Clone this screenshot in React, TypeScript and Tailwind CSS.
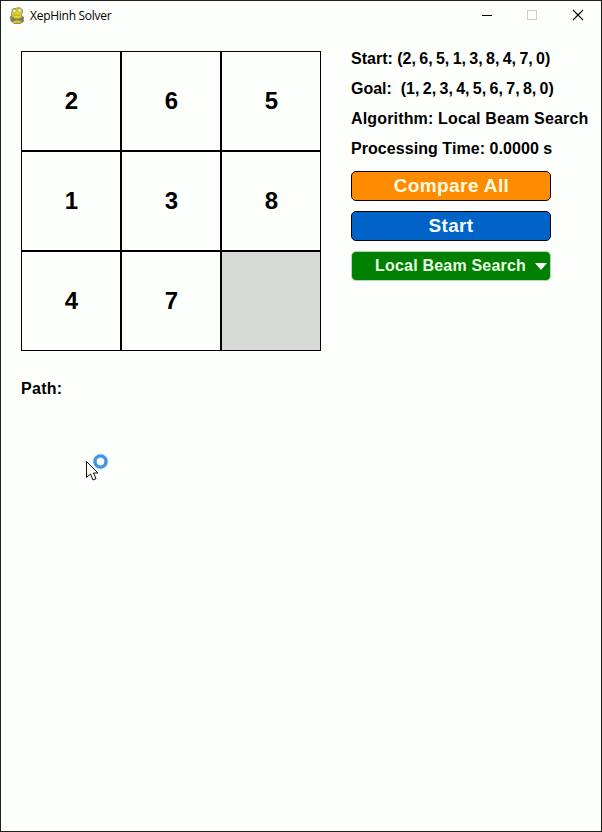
const tiles = [2, 6, 5, 1, 3, 8, 4, 7, 0];

function SnakeIcon() {
  return (
    <svg width="16" height="18" viewBox="0 0 16 18" className="mr-[5px] shrink-0">
      <path d="M2.500 12.500 1 10l2-1 2 3M13 9.500l1.500.500-.500 5-2 1" fill="#c9b61d" stroke="#66601c" strokeWidth=".6" />
      <path d="M3 5C2.500 2.500 4 .800 6.500 1.500 9 .200 12 .500 13 2.500c1 2 .300 4-.500 5l1 4-2 5H5L2.500 14 4 10.500C2 9 2.500 7 3 5Z" fill="#e3d12c" stroke="#766c1c" strokeWidth=".7" />
      <circle cx="5.300" cy="3.900" r="1.800" fill="#f7f5c5" stroke="#8c832b" strokeWidth=".5" />
      <circle cx="10.700" cy="3.500" r="1.900" fill="#f7f5c5" stroke="#8c832b" strokeWidth=".5" />
      <path d="M4 7.500c2 1.300 6 1.300 8.500-.500" fill="none" stroke="#a3941c" strokeWidth=".7" />
      <path d="M1.500 10.500h3l1.500 1h4l1.500-1h3v4h-3l-1-1H6l-1 1H1.500Z" fill="#777b68" />
      <path d="M5.500 15h6" stroke="#d6c52c" strokeWidth="2" />
    </svg>
  );
}

function TitleBar() {
  return (
    <header className="flex h-[30px] items-center pl-2 font-['Open_Sans','Noto_Sans',sans-serif] text-[12px]">
      <SnakeIcon />
      <span className="tracking-[-0.27px]">XepHinh Solver</span>
      <div className="ml-auto flex">
        <svg width="45" height="28" viewBox="0 0 45 28" shapeRendering="crispEdges">
          <path d="M17 13.500h10" stroke="#000" />
        </svg>
        <svg width="45" height="28" viewBox="0 0 45 28" shapeRendering="crispEdges">
          <path d="M17.500 8.500h9v9h-9z" fill="none" stroke="#ccc" />
        </svg>
        <svg width="46" height="28" viewBox="0 0 46 28">
          <path d="m18 8 10 10m0-10L18 18" stroke="#000" strokeWidth="1.100" />
        </svg>
      </div>
    </header>
  );
}

function Board() {
  return (
    <div className="grid h-[300px] w-[300px] shrink-0 grid-cols-3 grid-rows-3">
      {tiles.map((n) => (
        <div
          key={n}
          className={`flex items-center justify-center border border-black pb-px pl-px text-2xl ${n === 0 ? "bg-[#d8dad8]" : ""}`}
        >
          {n !== 0 && n}
        </div>
      ))}
    </div>
  );
}

export default function App() {
  return (
    <div className="relative h-[832px] w-[602px] overflow-hidden border border-[#202020] bg-[#fdfffc] font-['Liberation_Sans',Arial,sans-serif] text-black">
      <TitleBar />
      <main className="px-5 pt-5 font-bold">
        <div className="flex gap-[30px]">
          <Board />
          <div className="flex w-[240px] shrink-0 flex-col whitespace-pre text-base">
            <p className="-mt-[7px] h-[30px] leading-[30px]">Start: <span className="[word-spacing:-1.1px]">(2, 6, 5, 1, 3, 8, 4, 7, 0)</span></p>
            <p className="h-[30px] leading-[30px]">Goal:  <span className="[word-spacing:-1.1px]">(1, 2, 3, 4, 5, 6, 7, 8, 0)</span></p>
            <p className="h-[30px] leading-[30px] tracking-[0.16px]">Algorithm: Local Beam Search</p>
            <p className="h-[30px] leading-[30px] tracking-[0.06px]">Processing Time: 0.0000 s</p>
            <button className="mt-[7px] h-[30px] w-[200px] rounded-[5px] border border-black bg-[#ff8c00] pl-px text-[19px] leading-[28px] tracking-[0.4px] text-[#fffbe0]">Compare All</button>
            <button className="mt-2.5 h-[30px] w-[200px] rounded-[5px] border border-black bg-[#0063c7] text-[19px] leading-[28px] tracking-[0.3px] text-[#f5fcff]">Start</button>
            <button className="mt-2.5 flex h-[30px] w-[200px] items-center rounded-[5px] border border-[#b5d9b1] bg-[#008000] pl-[23px] text-[#eaffe3]">
              <span className="w-[160px] text-left leading-[28px] tracking-[0.2px]">Local Beam Search</span>
              <svg width="12" height="7" viewBox="0 0 12 7"><path d="M0 0h12L6 7Z" fill="#fff" /></svg>
            </button>
          </div>
        </div>
        <p className="mt-[28px] text-base leading-5 tracking-[0.3px]">Path:</p>
      </main>
      <svg className="absolute left-[84px] top-[451px]" width="26" height="31" viewBox="0 0 26 31">
        <circle cx="15.500" cy="9.500" r="5.700" fill="#fff" stroke="#b9e4fb" strokeWidth="4.500" />
        <circle cx="15.500" cy="9.500" r="5.500" fill="none" stroke="#3f95e3" strokeWidth="3.200" />
        <path d="M1.500 9.500v16l4-3.500 2.500 6 3-1.300-2.500-5.700H13Z" fill="#fff" stroke="#111" />
      </svg>
    </div>
  );
}
